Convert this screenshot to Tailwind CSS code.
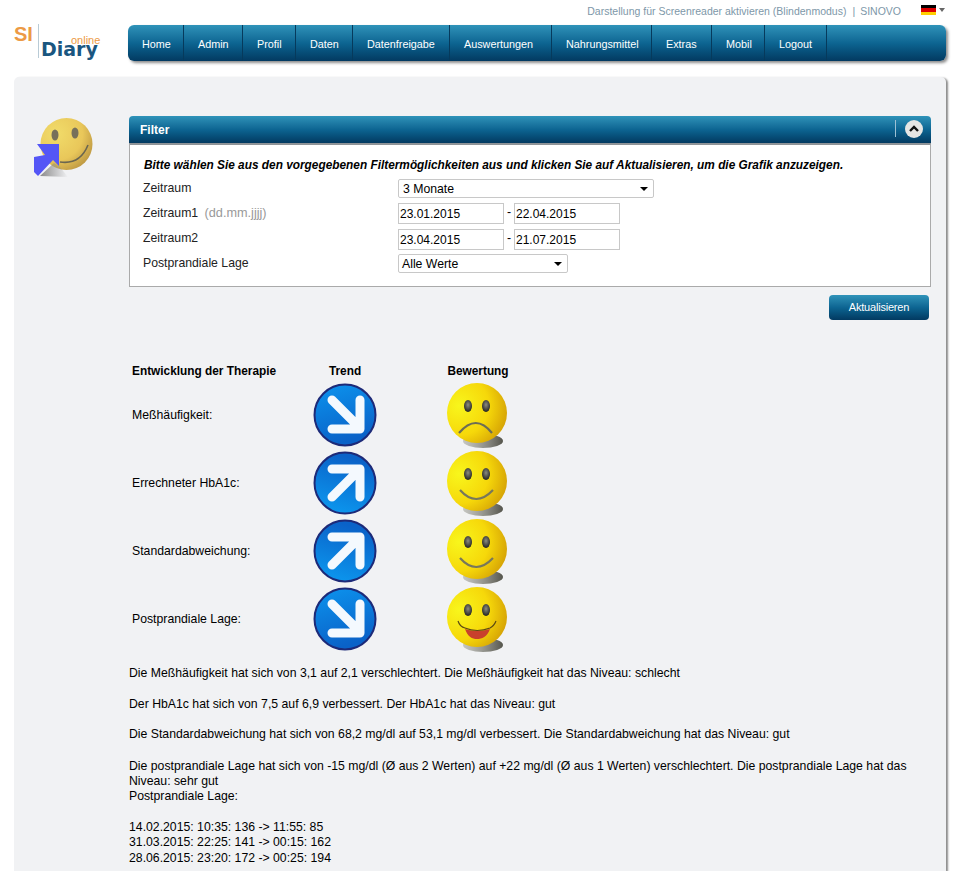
<!DOCTYPE html>
<html lang="de">

<head>
    <meta charset="UTF-8">
    <title>SI Diary online</title>
    <script src="https://cdn.jsdelivr.net/npm/@tailwindcss/browser@4"></script>
</head>

<body class="bg-white font-['Liberation_Sans',Arial,sans-serif] text-black h-[871px] overflow-hidden">
    <svg width="0" height="0" class="absolute">
        <defs>
            <radialGradient id="yellow" cx="0.2" cy="0.38" r="0.9">
                <stop offset="0" stop-color="#f8f61c" />
                <stop offset="0.55" stop-color="#f6d80a" />
                <stop offset="1" stop-color="#cf9804" />
            </radialGradient>
            <radialGradient id="paleYellow" cx="0.3" cy="0.3" r="0.85">
                <stop offset="0" stop-color="#f1dc6a" />
                <stop offset="0.6" stop-color="#e9c75a" />
                <stop offset="1" stop-color="#b58f3e" />
            </radialGradient>
            <linearGradient id="blueDisc" x1="0" y1="0" x2="0.3" y2="1">
                <stop offset="0" stop-color="#0c94ee" />
                <stop offset="1" stop-color="#0a62c8" />
            </linearGradient>
            <linearGradient id="blueDiscUp" x1="0" y1="1" x2="0.3" y2="0">
                <stop offset="0" stop-color="#0c9cf2" />
                <stop offset="1" stop-color="#0a62c8" />
            </linearGradient>
            <radialGradient id="eye" cx="0.5" cy="0.4" r="0.6">
                <stop offset="0" stop-color="#8c8c80" />
                <stop offset="1" stop-color="#222220" />
            </radialGradient>
            <linearGradient id="dropShadow" x1="0" y1="0" x2="1" y2="0">
                <stop offset="0" stop-color="#9a9a90" stop-opacity=".5" />
                <stop offset="1" stop-color="#55554c" />
            </linearGradient>
            <linearGradient id="arrowShade" x1="0" y1="0" x2="1" y2="0">
                <stop offset="0" stop-color="#8a8a8a" />
                <stop offset="1" stop-color="#8a8a8a" stop-opacity="0" />
            </linearGradient>
            <symbol id="smileyBase" viewBox="0 0 62 66">
                <ellipse cx="36" cy="58" rx="20" ry="7" fill="url(#dropShadow)" />
                <circle cx="30" cy="30" r="30" fill="url(#yellow)" />
                <ellipse cx="21" cy="23" rx="4" ry="6" fill="url(#eye)" />
                <ellipse cx="39" cy="23" rx="4" ry="6" fill="url(#eye)" />
            </symbol>
            <symbol id="arrowDown" viewBox="0 0 64 64">
                <circle cx="32" cy="32" r="30.5" fill="url(#blueDisc)" stroke="#1d2a78" stroke-width="2" />
                <path d="M19 17 L45 43 M47 17 V46 H19" fill="none" stroke="#f4f9fe" stroke-width="9" stroke-linecap="round" stroke-linejoin="round" />
            </symbol>
            <symbol id="arrowUp" viewBox="0 0 64 64">
                <circle cx="32" cy="32" r="30.5" fill="url(#blueDiscUp)" stroke="#1d2a78" stroke-width="2" />
                <path d="M19 46 L45 20 M19 18 H47 V46" fill="none" stroke="#f4f9fe" stroke-width="9" stroke-linecap="round" stroke-linejoin="round" />
            </symbol>
        </defs>
    </svg>

    <!-- top links -->
    <div class="h-[25px] flex justify-end items-start pt-[5px] pr-[14px] text-[10.5px] leading-[12px] text-[#7d97a8]">
        <a href="#">Darstellung für Screenreader aktivieren (Blindenmodus)</a>
        <span class="ml-[6px] mr-[5px]">|</span>
        <a href="#">SINOVO</a>
        <span class="ml-[20px] flex items-center gap-[3px]">
            <span class="w-[15px] h-[10px] flex flex-col">
                <span class="h-1/3 bg-black"></span>
                <span class="h-1/3 bg-[#dd0000]"></span>
                <span class="h-1/3 bg-[#ffce00]"></span>
            </span>
            <span class="border-x-[3px] border-x-transparent border-t-[4px] border-t-[#666]"></span>
        </span>
    </div>

    <!-- header -->
    <div class="flex h-[52px] pl-[14px] pr-[13px]">
        <div class="relative w-[114px] h-[36px]">
            <span class="absolute left-0 top-0 text-[20px] leading-[18px] font-bold text-[#ec9a45]">SI</span>
            <span class="absolute left-[24px] -top-[1px] w-px h-[34px] bg-[#b9cbd6]"></span>
            <span class="absolute left-[57px] top-[12px] text-[11px] leading-[7px] text-[#ec9a45]">online</span>
            <span class="absolute left-[27px] top-[18px] font-['DejaVu_Sans',sans-serif] text-[19px] leading-[12px] font-bold text-[#1a5680]">Diary</span>
        </div>
        <nav class="flex-1 h-[36px] rounded-[6px] bg-gradient-to-b from-[#2f93b9] via-[#0d6592] to-[#033a61] shadow-[2px_2px_3px_rgba(0,0,0,.45)] flex text-[10.8px] text-white">
            <a href="#" class="w-[56px] pl-[14px] leading-[38px] border-r border-[#063a5c]">Home</a>
            <a href="#" class="w-[59px] pl-[14px] leading-[38px] border-r border-[#063a5c]">Admin</a>
            <a href="#" class="w-[53px] pl-[14px] leading-[38px] border-r border-[#063a5c]">Profil</a>
            <a href="#" class="w-[57px] pl-[14px] leading-[38px] border-r border-[#063a5c]">Daten</a>
            <a href="#" class="w-[97px] pl-[14px] leading-[38px] border-r border-[#063a5c]">Datenfreigabe</a>
            <a href="#" class="w-[102px] pl-[14px] leading-[38px] border-r border-[#063a5c]">Auswertungen</a>
            <a href="#" class="w-[100px] pl-[14px] leading-[38px] border-r border-[#063a5c]">Nahrungsmittel</a>
            <a href="#" class="w-[60px] pl-[14px] leading-[38px] border-r border-[#063a5c]">Extras</a>
            <a href="#" class="w-[53px] pl-[14px] leading-[38px] border-r border-[#063a5c]">Mobil</a>
            <a href="#" class="w-[62px] pl-[14px] leading-[38px] border-r border-[#063a5c]">Logout</a>
        </nav>
    </div>

    <!-- main panel -->
    <div class="ml-[14px] mr-[13px] h-[794px] bg-[#f1f2f4] rounded-t-[5px] shadow-[2px_1px_2px_rgba(0,0,0,.45)] flex overflow-hidden">
        <div class="w-[115px] shrink-0 pt-[40px] pl-[20px]">
            <svg width="60" height="60" viewBox="0 0 60 60">
                <circle cx="32.5" cy="27" r="26" fill="url(#paleYellow)" />
                <ellipse cx="21" cy="18" rx="3.5" ry="5.5" fill="#77705a" />
                <ellipse cx="41" cy="16" rx="3.5" ry="5.5" fill="#77705a" />
                <path d="M26 45 Q46 48 54 28" fill="none" stroke="#6b6650" stroke-width="1.6" />
                <path d="M6 59 L20 46 L26 50 L34 60 Z" fill="url(#arrowShade)" />
                <path d="M3 27 H25 V49 L19 43 L4 59 L0 55 V40 L11 38 Z" fill="#5456f6" />
            </svg>
        </div>

        <div class="w-[802px] pt-[39px]">
            <!-- filter box -->
            <div class="h-[27px] rounded-t-[4px] bg-gradient-to-b from-[#2f93b9] via-[#0d6592] to-[#033a61] flex items-center justify-between text-white">
                <span class="pl-[11px] text-[12px] font-bold">Filter</span>
                <span class="flex items-center mb-[2px]">
                    <span class="w-px h-[17px] bg-[#9dc1d4]"></span>
                    <svg width="18" height="18" viewBox="0 0 18 18" class="ml-[9px] mr-[8px]">
                        <circle cx="9" cy="9" r="9" fill="#e6e6e4" />
                        <path d="M5 11 L9 7 L13 11" fill="none" stroke="#111" stroke-width="2.4" />
                    </svg>
                </span>
            </div>
            <div class="h-[144px] bg-white border border-t-2 border-[#aaaaaa] border-t-[#8f9498] pl-[13px] pt-[13px] text-[12.25px]">
                <p class="font-bold italic text-[11.85px] leading-[14px] mb-[7px] ml-[1px]">Bitte wählen Sie aus den vorgegebenen Filtermöglichkeiten aus und klicken Sie auf Aktualisieren, um die Grafik anzuzeigen.</p>
                <div class="flex h-[25px] leading-[16px]">
                    <span class="w-[255px] pt-[1px] text-[#222]">Zeitraum</span>
                    <div class="w-[256px] h-[19px] flex items-center justify-between border border-[#c8c8c8] rounded-[2px] px-[4px]">3 Monate
                        <span class="border-x-4 border-x-transparent border-t-[4px] border-t-black mr-[1px]"></span>
                    </div>
                </div>
                <div class="flex h-[26px] leading-[16px]">
                    <span class="w-[255px] pt-[1px] text-[#222]">Zeitraum1 <span class="text-[#999] text-[12.7px] ml-[3px]">(dd.mm.jjjj)</span></span>
                    <input value="23.01.2015" class="w-[106px] h-[21px] border border-[#c8c8c8] px-[1px] -mt-[1px] text-[12px]">
                    <span class="w-[10px] text-center">-</span>
                    <input value="22.04.2015" class="w-[106px] h-[21px] border border-[#c8c8c8] px-[1px] -mt-[1px] text-[12px]">
                </div>
                <div class="flex h-[24px] leading-[16px]">
                    <span class="w-[255px] text-[#222]">Zeitraum2</span>
                    <input value="23.04.2015" class="w-[106px] h-[21px] border border-[#c8c8c8] px-[1px] -mt-[1px] text-[12px]">
                    <span class="w-[10px] text-center">-</span>
                    <input value="21.07.2015" class="w-[106px] h-[21px] border border-[#c8c8c8] px-[1px] -mt-[1px] text-[12px]">
                </div>
                <div class="flex leading-[16px]">
                    <span class="w-[255px] pt-[1px] text-[#222]">Postprandiale Lage</span>
                    <div class="w-[170px] h-[19px] flex items-center justify-between border border-[#c8c8c8] rounded-[2px] px-[3px]">Alle Werte
                        <span class="border-x-4 border-x-transparent border-t-[4px] border-t-black mr-[2px]"></span>
                    </div>
                </div>
            </div>
            <div class="flex justify-end pr-[2px] mt-[8px]">
                <button class="w-[100px] h-[25px] rounded-[4px] bg-gradient-to-b from-[#2f93b9] via-[#0d6592] to-[#033a61] text-white text-[11px] tracking-[-.2px]">Aktualisieren</button>
            </div>

            <!-- therapy table -->
            <div class="mt-[44px] pl-[3px] text-[12.25px] grid grid-cols-[174px_80px_184px] grid-rows-[17px_repeat(4,68px)] w-[441px] items-center">
                <div class="font-bold text-[11.85px] leading-[14px] self-start">Entwicklung der Therapie</div>
                <div class="font-bold text-[11.85px] leading-[14px] self-start text-center pr-[2px]">Trend</div>
                <div class="font-bold text-[11.85px] leading-[14px] self-start text-center">Bewertung</div>

                <div>Meßhäufigkeit:</div>
                <svg width="64" height="64" class="ml-[7px]"><use href="#arrowDown" /></svg>
                <svg width="62" height="66" class="ml-[61px] self-start mt-[2px]"><use href="#smileyBase" /><path d="M12 50 Q29 30 45 50" fill="none" stroke="#6d6d55" stroke-width="2.2" /></svg>

                <div>Errechneter HbA1c:</div>
                <svg width="64" height="64" class="ml-[7px]"><use href="#arrowUp" /></svg>
                <svg width="62" height="66" class="ml-[61px] self-start mt-[2px]"><use href="#smileyBase" /><path d="M13 39 Q29 57 46 39" fill="none" stroke="#77775c" stroke-width="2.2" /></svg>

                <div>Standardabweichung:</div>
                <svg width="64" height="64" class="ml-[7px]"><use href="#arrowUp" /></svg>
                <svg width="62" height="66" class="ml-[61px] self-start mt-[2px]"><use href="#smileyBase" /><path d="M13 39 Q29 57 46 39" fill="none" stroke="#77775c" stroke-width="2.2" /></svg>

                <div>Postprandiale Lage:</div>
                <svg width="64" height="64" class="ml-[7px]"><use href="#arrowDown" /></svg>
                <svg width="62" height="66" class="ml-[61px] self-start mt-[2px]"><use href="#smileyBase" /><path d="M18 42 Q30 46 43 42 C40 50 35 52 30 52 C25 52 21 50 18 42 Z" fill="#c8402c" /><path d="M11 34 Q13 40 18 41 Q30 46 43 41 Q47 39 49 34" fill="none" stroke="#5c4a14" stroke-width="1.2" /></svg>
            </div>

            <!-- result text -->
            <div class="mt-[13px] text-[12.25px] leading-[15.3px] w-[790px]">
                <p>Die Meßhäufigkeit hat sich von 3,1 auf 2,1 verschlechtert. Die Meßhäufigkeit hat das Niveau: schlecht</p>
                <p class="mt-[15.3px]">Der HbA1c hat sich von 7,5 auf 6,9 verbessert. Der HbA1c hat das Niveau: gut</p>
                <p class="mt-[15.3px]">Die Standardabweichung hat sich von 68,2 mg/dl auf 53,1 mg/dl verbessert. Die Standardabweichung hat das Niveau: gut</p>
                <p class="mt-[16.3px]">Die postprandiale Lage hat sich von -15 mg/dl (Ø aus 2 Werten) auf +22 mg/dl (Ø aus 1 Werten) verschlechtert. Die postprandiale Lage hat das Niveau: sehr gut</p>
                <p>Postprandiale Lage:</p>
                <p class="mt-[15.3px]">14.02.2015: 10:35: 136 -&gt; 11:55: 85</p>
                <p>31.03.2015: 22:25: 141 -&gt; 00:15: 162</p>
                <p>28.06.2015: 23:20: 172 -&gt; 00:25: 194</p>
            </div>
        </div>
    </div>
</body>

</html>
